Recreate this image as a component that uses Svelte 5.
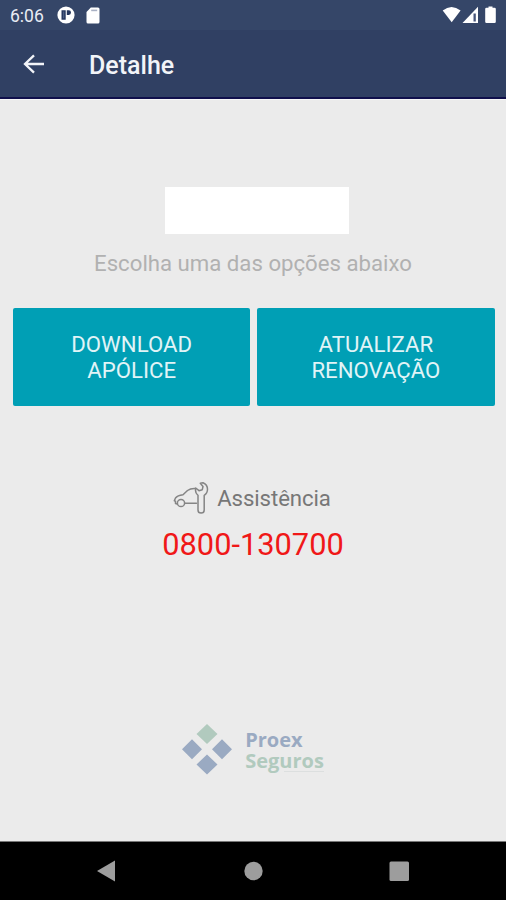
<script lang="ts">
  interface Action {
    id: string;
    lines: string[];
  }

  const title = 'Detalhe';
  const phone = '0800-130700';

  const actions: Action[] = [
    { id: 'download', lines: ['DOWNLOAD', 'APÓLICE'] },
    { id: 'renew', lines: ['ATUALIZAR', 'RENOVAÇÃO'] },
  ];
</script>

<div class="screen">
  <header>
    <div class="status-bar">
      <span class="clock">6:06</span>
      <svg class="app-icon" width="18" height="18" viewBox="0 0 18 18">
        <circle cx="9" cy="9" r="8.6" fill="#fff" />
        <path d="M4.5 4.3h4.2v9.4H4.5z M9.8 4.3h2q2.200 0 2.200 2.300t-2.200 2.300h-2z" fill="#26375e" />
        <path d="M6.2 5.5h1v6.800h-1z" fill="#53648a" />
      </svg>
      <svg class="card-icon" width="14" height="17" viewBox="0 0 14 17">
        <path d="M4.8.5H12q1.5 0 1.5 1.5v13q0 1.5-1.5 1.5H2Q.5 16.5.5 15V5z" fill="#fff" />
        <path d="M5.2 3.4h6" stroke="#a9b1c4" stroke-width="1.6" />
      </svg>
      <svg class="signals" width="58" height="18" viewBox="0 0 58 18">
        <path d="M.7 4.5Q9.500-2.5 18.600 4.500L9.700 16.2z" fill="#fff" />
        <path d="M36 .8V17H20.500z" fill="#fff" />
        <path d="M31.500 7.500h2.300v8h-2.300z" fill="#46557a" />
        <path d="M46.500 1.800V.5h4v1.300h2q1.300 0 1.300 1.300V15.700q0 1.300-1.300 1.300h-8q-1.300 0-1.300-1.300V3.100q0-1.300 1.300-1.300z" fill="#fff" />
      </svg>
    </div>
    <div class="toolbar">
      <button class="back" aria-label="Voltar">
        <svg width="22" height="20" viewBox="0 0 22 20">
          <path d="M21 10H2M11 1.300L2 10l9 8.700" fill="none" stroke="#f2f4f8" stroke-width="2.300" />
        </svg>
      </button>
      <h1>{title}</h1>
    </div>
  </header>

  <main>
    <div class="policy"></div>
    <p class="hint">Escolha uma das opções abaixo</p>

    <div class="actions">
      {#each actions as action (action.id)}
        <button class="action">
          {#each action.lines as line}
            <span>{line}</span>
          {/each}
        </button>
      {/each}
    </div>

    <div class="assist">
      <svg width="36" height="34" viewBox="0 0 36 34" fill="none" stroke="#858585" stroke-width="1.5" stroke-linecap="round" stroke-linejoin="round">
        <path d="M22 7.500q-4.500-.2-7.500 2l-4.500 4.300Q4.500 14.500 2.500 17L1.300 19.800l1.200.5v2.200l1.700.4M11.800 22.300H23.500" />
        <circle cx="8" cy="22" r="3.600" />
        <path d="M25 14.300V29a3.100 3.100 0 0 0 6.200 0V14.300q3.300-2 3.300-6 0-4.800-4.500-6.600l-2.700.6 2.700 3.200-.7 3.200-3.300 1-3.300-2.700q-1 4.800 2.300 7.300z" />
      </svg>
      <span>Assistência</span>
    </div>
    <a class="phone" href="tel:{phone}">{phone}</a>

    <div class="brand">
      <svg width="50" height="51" viewBox="0 0 50 51">
        <path d="M25 0l10.500 10L25 20 14.500 10z" fill="#b1cabe" />
        <path d="M10 15.200l10 10-10 10-10-10zM40 15.200l10 10-10 10-10-10zM25 30.500l10.500 10-10.500 10-10.500-10z" fill="#9aaac2" />
      </svg>
      <div class="brand-name">
        <span class="proex">Proex</span>
        <span class="seguros">Seguros</span>
        <i></i>
      </div>
    </div>
  </main>

  <nav>
    <svg width="506" height="58" viewBox="0 0 506 58" fill="#9d9d9d">
      <path d="M97 29l18-10.500v21z" />
      <circle cx="253.500" cy="29" r="9.200" />
      <rect x="389.500" y="19.500" width="19.500" height="19.500" rx="1.500" />
    </svg>
  </nav>
</div>

<style>
  :global(body) {
    margin: 0;
  }

  .screen {
    display: flex;
    flex-direction: column;
    width: 506px;
    height: 900px;
    overflow: hidden;
    background: #ebebeb;
    font-family: Roboto, sans-serif;
  }

  button {
    border: 0;
    padding: 0;
    font: inherit;
  }

  header {
    box-sizing: border-box;
    height: 99px;
    background: #304063;
    border-bottom: 2px solid #10104c;
  }

  .status-bar {
    display: flex;
    align-items: flex-start;
    box-sizing: border-box;
    height: 30px;
    padding: 6px 6px 0 10px;
    background: #354668;
  }

  .clock {
    width: 47px;
    color: #e9edf4;
    font-size: 17.5px;
    line-height: 20px;
  }

  .card-icon {
    margin: 1px 0 0 11px;
  }

  .signals {
    margin-left: auto;
  }

  .toolbar {
    display: flex;
    align-items: center;
    height: 67px;
    padding-left: 23px;
  }

  .back {
    display: flex;
    width: 66px;
    background: none;
  }

  h1 {
    margin: 4px 0 0;
    color: #f2f4f8;
    font-size: 25px;
    font-weight: 500;
    line-height: 30px;
  }

  main {
    display: flex;
    flex: 1;
    flex-direction: column;
    align-items: center;
    border-top: 1px solid #f7f7f7;
  }

  .policy {
    width: 184px;
    height: 47px;
    margin: 87px 0 0 8px;
    background: #fff;
  }

  .hint {
    margin: 15px 0 0;
    color: #b1b1b1;
    font-size: 22.2px;
    line-height: 28px;
  }

  .actions {
    display: grid;
    grid-template-columns: 1fr 1fr;
    gap: 7px;
    align-self: stretch;
    margin: 31px 11.5px 0 13px;
  }

  .action {
    display: flex;
    flex-direction: column;
    align-items: center;
    justify-content: center;
    height: 98px;
    border-radius: 2px;
    background: #009fb5;
    color: #e1f4f7;
    font-size: 22.2px;
    line-height: 26.5px;
  }

  .assist {
    display: flex;
    align-items: center;
    gap: 8px;
    margin: 75px 2px 0 0;
    color: #777;
    font-size: 22.2px;
    letter-spacing: -0.1px;
    line-height: 34px;
  }

  .phone {
    margin-top: 12px;
    color: #f01818;
    font-size: 30.8px;
    line-height: 36px;
    text-decoration: none;
  }

  .brand {
    display: flex;
    gap: 13px;
    margin-top: 161px;
  }

  .brand-name {
    display: flex;
    flex-direction: column;
    padding-top: 5px;
    font-family: "Open Sans", sans-serif;
    font-size: 20px;
    font-weight: 700;
    line-height: 21px;
  }

  .proex {
    color: #9aaac2;
  }

  .seguros {
    color: #b1cabe;
  }

  .brand-name i {
    align-self: flex-end;
    width: 40px;
    height: 1px;
    background: #dcdfdf;
  }

  nav {
    height: 58px;
    background: #000;
    border-top: 1px solid #777;
  }

  nav svg {
    display: block;
  }
</style>
